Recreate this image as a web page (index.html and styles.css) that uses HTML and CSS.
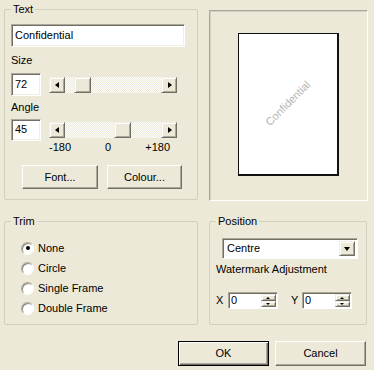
FILE: index.html
```html
<!DOCTYPE html>
<html lang="en">
<head>
  <meta charset="UTF-8">
  <title>Watermark</title>
  <link rel="stylesheet" href="styles.css">
</head>
<body>

<div class="dialog">
  <div class="row top">
    <!-- Text settings -->
    <fieldset class="group text-group">
      <legend>Text</legend>
      <div class="edit wide">Confidential</div>

      <div class="label">Size</div>
      <div class="slider-row">
        <div class="edit small">72</div>
        <div class="scroll">
          <span class="sbtn arrow-left"></span>
          <span class="track"><span class="thumb" style="margin-left:9px"></span></span>
          <span class="sbtn arrow-right"></span>
        </div>
      </div>

      <div class="label angle">Angle</div>
      <div class="slider-row short">
        <div class="edit small">45</div>
        <div class="scroll">
          <span class="sbtn arrow-left"></span>
          <span class="track"><span class="thumb" style="margin-left:49px"></span></span>
          <span class="sbtn arrow-right"></span>
        </div>
      </div>
      <div class="ticks">
        <span>-180</span>
        <span>0</span>
        <span>+180</span>
      </div>

      <div class="btn-row">
        <button class="btn font-btn">Font...</button>
        <button class="btn">Colour...</button>
      </div>
    </fieldset>

    <!-- Preview -->
    <div class="preview">
      <div class="page">
        <span class="watermark">Confidential</span>
      </div>
    </div>
  </div>

  <div class="row mid">
    <fieldset class="group trim-group">
      <legend>Trim</legend>
      <label class="radio"><span class="dot checked"></span>None</label>
      <label class="radio"><span class="dot"></span>Circle</label>
      <label class="radio"><span class="dot"></span>Single Frame</label>
      <label class="radio"><span class="dot"></span>Double Frame</label>
    </fieldset>

    <fieldset class="group position-group">
      <legend>Position</legend>
      <div class="combo">
        <span class="combo-text">Centre</span>
        <span class="combo-btn"></span>
      </div>
      <div class="label adj">Watermark Adjustment</div>
      <div class="spin-row">
        <span class="axis">X</span>
        <div class="spin">
          <span class="spin-text">0</span>
          <span class="spin-btns"><span class="up"></span><span class="down"></span></span>
        </div>
        <span class="axis y-axis">Y</span>
        <div class="spin">
          <span class="spin-text">0</span>
          <span class="spin-btns"><span class="up"></span><span class="down"></span></span>
        </div>
      </div>
    </fieldset>
  </div>

  <div class="actions">
    <button class="btn dlg default">OK</button>
    <button class="btn dlg">Cancel</button>
  </div>
</div>

</body>
</html>
```

FILE: styles.css
```css
* {
  box-sizing: border-box;
}

body {
  margin: 0;
  background: #ece9d8;
  font-family: "Liberation Sans", Arial, sans-serif;
  font-size: 11px;
  line-height: 13px;
  color: #000;
}

.dialog {
  padding: 2px 0 0 4px;
}

.row {
  display: flex;
  gap: 11px;
}

.mid {
  margin-top: 13px;
}

/* Group boxes */
.group {
  margin: 0;
  padding: 10px 6px 0 6px;
  border: 1px solid #d0d0bf;
  border-radius: 2px;
  min-width: 0;
}

.group legend {
  padding: 0 2px;
  line-height: 14px;
}

.text-group {
  width: 194px;
  height: 198px;
  padding-top: 8px;
}

.trim-group {
  width: 194px;
  height: 111px;
}

.position-group {
  width: 158px;
  height: 111px;
}

/* Edit boxes */
.edit {
  background: #fff;
  border: 1px solid;
  border-color: #aca899 #fff #fff #aca899;
  box-shadow: inset 1px 1px #716f64, inset -1px -1px #f1efe2;
  padding: 4px 3px;
}

.edit.wide {
  width: 174px;
  height: 23px;
}

.edit.small {
  width: 30px;
  height: 23px;
}

.label {
  margin-top: 7px;
}

.label.angle {
  margin-top: 5px;
}

.slider-row {
  display: flex;
  align-items: center;
  gap: 8px;
  margin-top: 6px;
}

.slider-row.short {
  margin-top: 5px;
}

.slider-row.short .edit {
  height: 22px;
  padding-top: 3px;
}

/* Scroll bar slider */
.scroll {
  display: flex;
  width: 128px;
  height: 16px;
}

.sbtn,
.thumb {
  position: relative;
  display: block;
  width: 16px;
  height: 16px;
  background: #ece9d8;
  border: 1px solid;
  border-color: #f1efe2 #716f64 #716f64 #f1efe2;
  box-shadow: inset 1px 1px #fff, inset -1px -1px #aca899;
}

.thumb {
  width: 17px;
}

.track {
  flex: 1;
  display: flex;
  background: repeating-conic-gradient(#fff 0 25%, #ece9d8 0 50%) 0 0 / 2px 2px;
}

.sbtn::before {
  content: "";
  position: absolute;
  top: 4px;
  width: 0;
  height: 0;
  border-top: 3.5px solid transparent;
  border-bottom: 3.5px solid transparent;
}

.arrow-left::before {
  left: 5px;
  border-right: 4px solid #000;
}

.arrow-right::before {
  left: 6px;
  border-left: 4px solid #000;
}

.ticks {
  display: flex;
  justify-content: space-between;
  width: 121px;
  margin-left: 38px;
}

.btn-row {
  display: flex;
  gap: 9px;
  margin-top: 11px;
  margin-left: 11px;
}

/* Push buttons */
.btn {
  height: 24px;
  width: 75px;
  padding: 0;
  font: inherit;
  color: #000;
  background: #ece9d8;
  border: 1px solid;
  border-color: #fff #716f64 #716f64 #fff;
  box-shadow: inset -1px -1px #aca899;
}

.font-btn {
  width: 76px;
}

/* Preview */
.preview {
  width: 159px;
  height: 191px;
  margin-top: 8px;
  display: flex;
  align-items: center;
  justify-content: center;
  border: 1px solid;
  border-color: #aca899 #fff #fff #aca899;
  box-shadow: inset 1px 1px #d4d0c0;
}

.page {
  width: 101px;
  height: 143px;
  margin-top: -3px;
  background: #fff;
  border: 1px solid #111;
  border-right-width: 2px;
  border-bottom-width: 2px;
  display: flex;
  align-items: center;
  justify-content: center;
}

.watermark {
  transform: rotate(-45deg);
  color: #b4b4b4;
  font-size: 11px;
}

/* Radios */
.radio {
  display: flex;
  align-items: center;
  gap: 4px;
  height: 20px;
  margin-left: 10px;
}

.dot {
  position: relative;
  width: 13px;
  height: 13px;
  border-radius: 50%;
  background: #fff;
  border: 1px solid;
  border-color: #aca899 #fff #fff #aca899;
  box-shadow: inset 1px 1px #8c8a80;
}

.dot.checked::after {
  content: "";
  position: absolute;
  left: 3.5px;
  top: 3.5px;
  width: 4px;
  height: 4px;
  border-radius: 50%;
  background: #000;
}

/* Combo */
.combo {
  display: flex;
  width: 136px;
  height: 21px;
  margin-left: 6px;
  background: #fff;
  border: 1px solid;
  border-color: #aca899 #fff #fff #aca899;
  box-shadow: inset 1px 1px #716f64;
  padding: 2px;
}

.combo-text {
  flex: 1;
  padding: 1px 2px;
}

.combo-btn,
.spin-btns span {
  position: relative;
  display: block;
  background: #ece9d8;
  border: 1px solid;
  border-color: #f1efe2 #716f64 #716f64 #f1efe2;
  box-shadow: inset 1px 1px #fff, inset -1px -1px #aca899;
}

.combo-btn {
  width: 16px;
  height: 15px;
}

.combo-btn::before {
  content: "";
  position: absolute;
  left: 4px;
  top: 5px;
  border-left: 3.5px solid transparent;
  border-right: 3.5px solid transparent;
  border-top: 4px solid #000;
}

.label.adj {
  margin-top: 4px;
}

.spin-row {
  display: flex;
  align-items: center;
  margin-top: 16px;
}

.axis {
  width: 12px;
}

.y-axis {
  margin-left: 13px;
  width: 11px;
}

.spin {
  display: flex;
  width: 50px;
  height: 17px;
  background: #fff;
  border: 1px solid;
  border-color: #aca899 #fff #fff #aca899;
  box-shadow: inset 1px 1px #716f64;
  padding: 1px;
}

.spin-text {
  flex: 1;
  padding-left: 1px;
  line-height: 13px;
}

.spin-btns {
  display: flex;
  flex-direction: column;
  width: 15px;
}

.spin-btns span {
  height: 7px;
}

.spin-btns span::before {
  content: "";
  position: absolute;
  left: 4px;
  top: 1.5px;
  border-left: 2.5px solid transparent;
  border-right: 2.5px solid transparent;
}

.spin-btns .up::before {
  border-bottom: 2.5px solid #000;
}

.spin-btns .down::before {
  border-top: 2.5px solid #000;
}

/* Dialog buttons */
.actions {
  display: flex;
  justify-content: flex-end;
  gap: 6px;
  margin-top: 16px;
  padding-right: 8px;
}

.btn.dlg {
  width: 91px;
  height: 25px;
}

.btn.default {
  border: 1px solid #000;
  box-shadow: inset 1px 1px #fff, inset -1px -1px #716f64, inset -2px -2px #aca899;
}
```
